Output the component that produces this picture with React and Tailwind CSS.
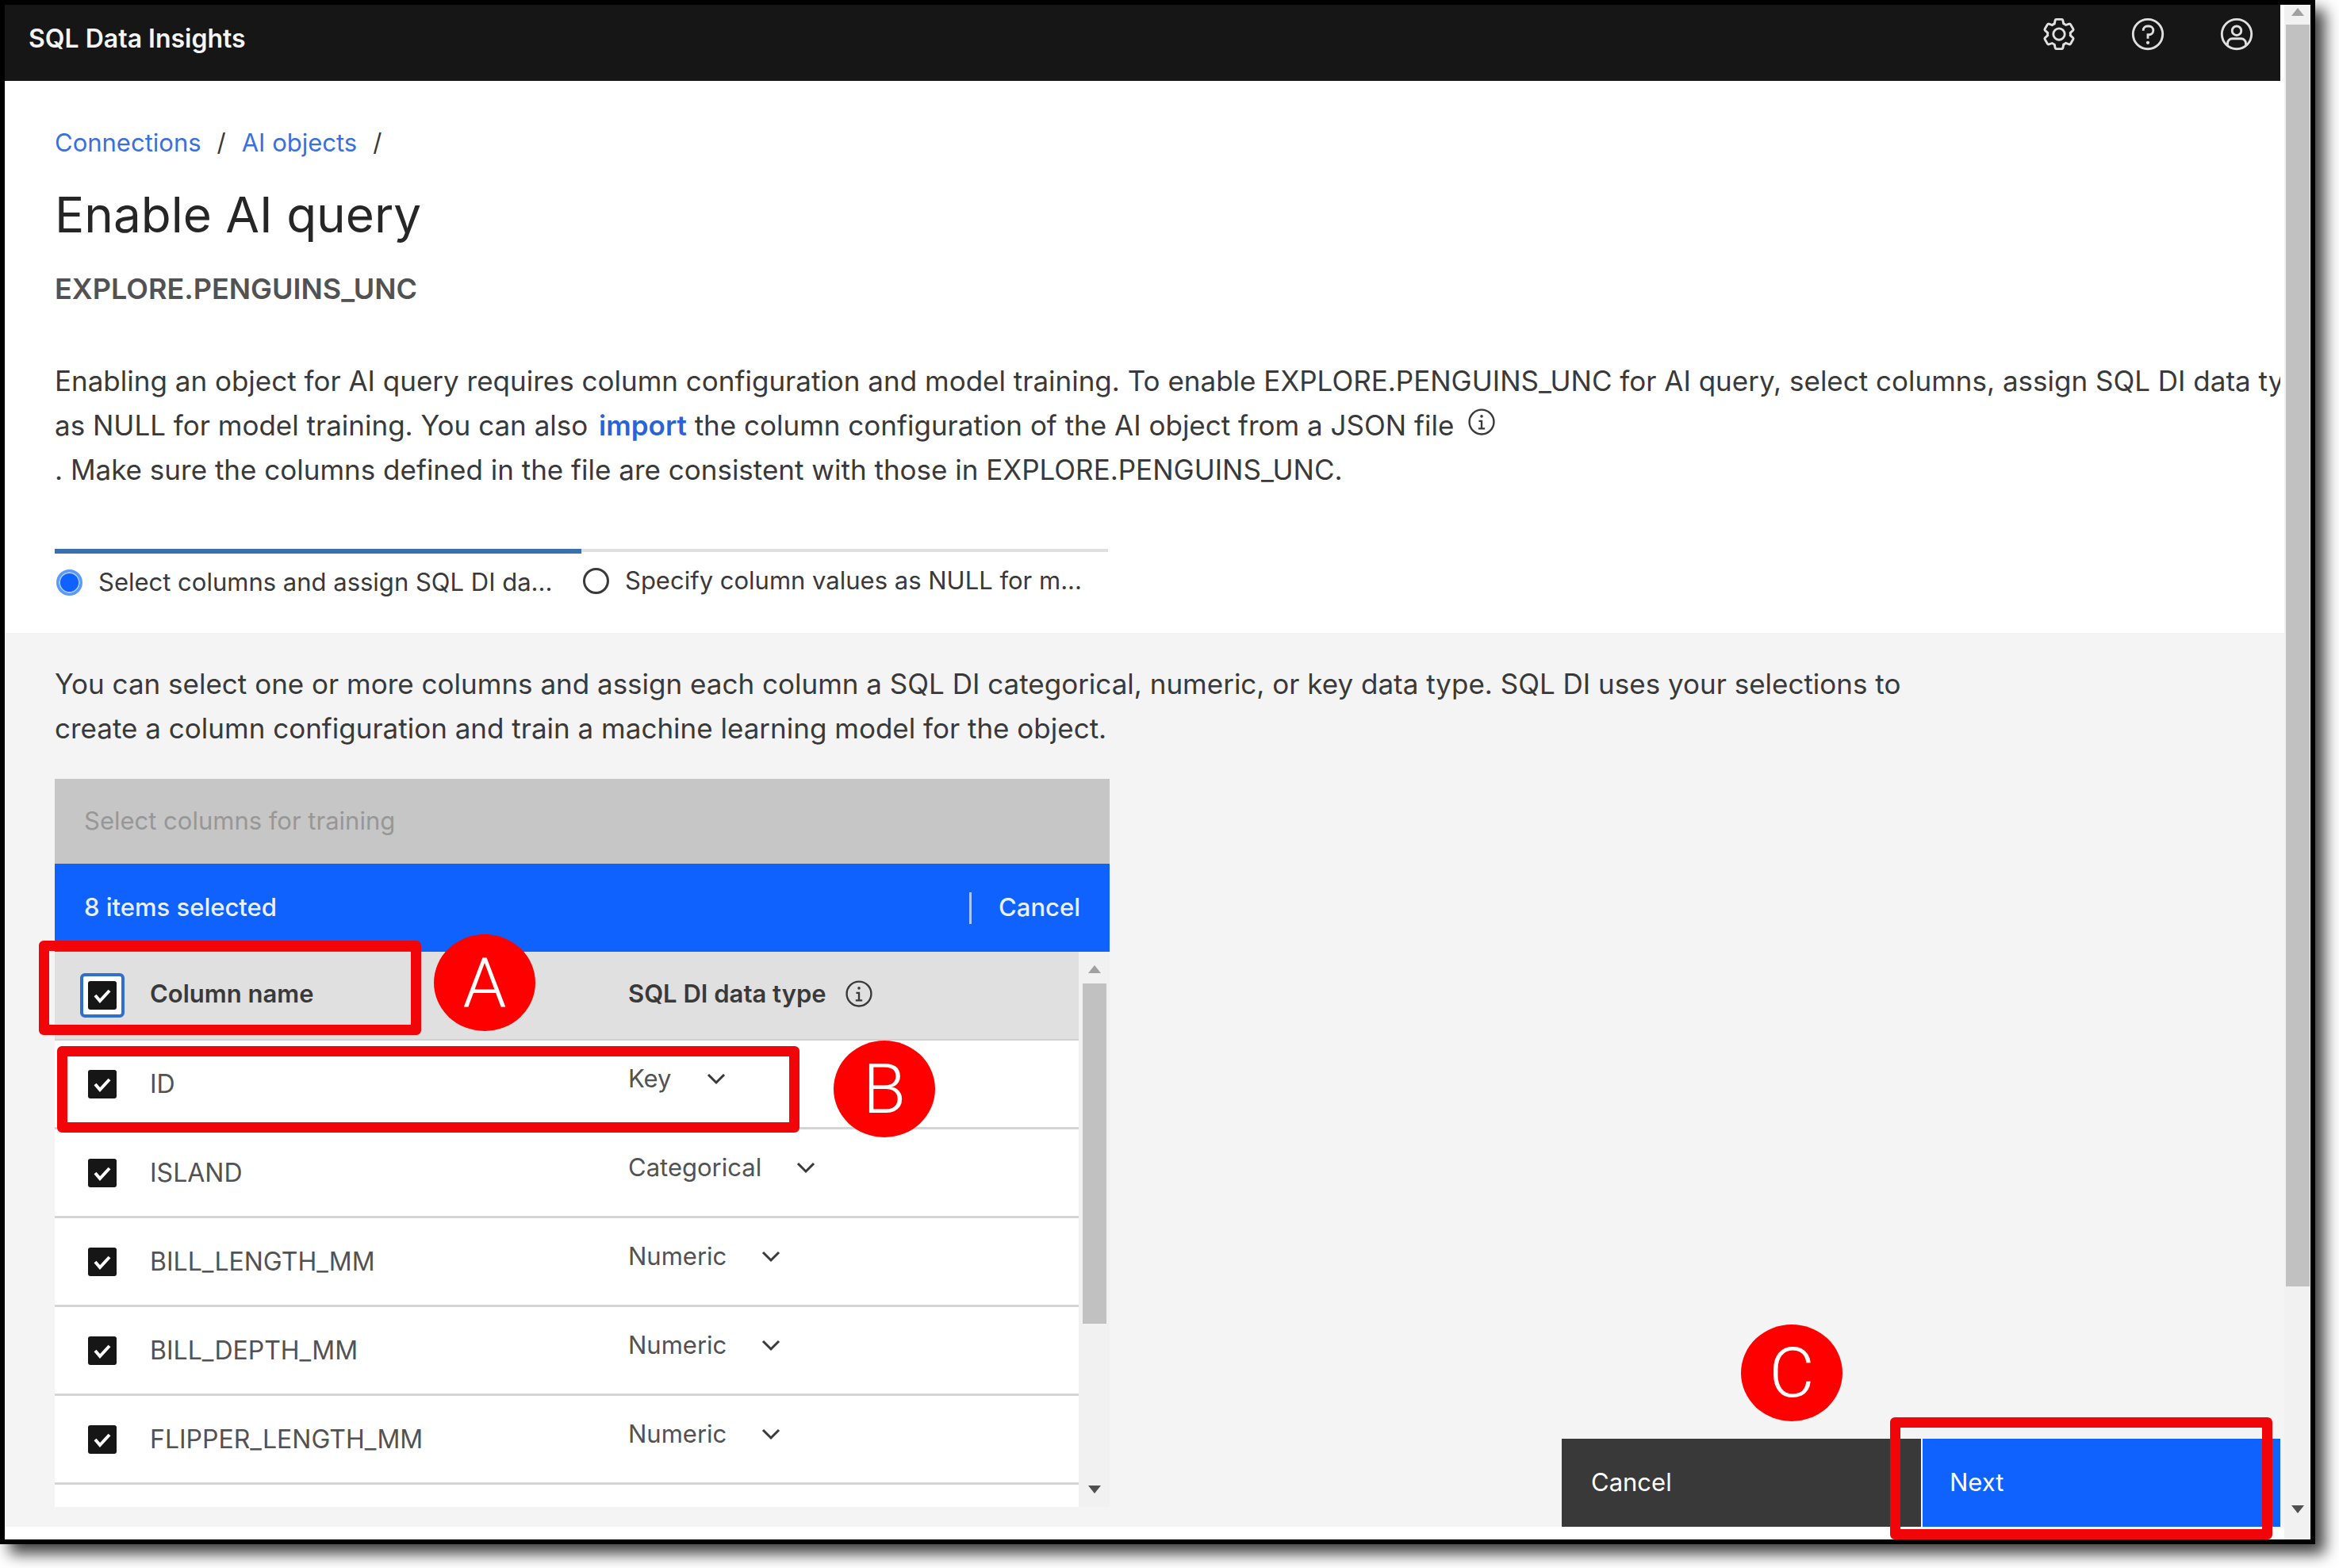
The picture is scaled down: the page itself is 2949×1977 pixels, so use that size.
import React from "react";

const COLUMNS = [
  { name: "ID", type: "Key" },
  { name: "ISLAND", type: "Categorical" },
  { name: "BILL_LENGTH_MM", type: "Numeric" },
  { name: "BILL_DEPTH_MM", type: "Numeric" },
  { name: "FLIPPER_LENGTH_MM", type: "Numeric" },
];

const TYPES = ["Key", "Categorical", "Numeric"];

function SettingsIcon() {
  return (
    <svg viewBox="0 0 32 32" className="size-[46px]" fill="currentColor" aria-hidden="true">
      <path d="M27,16.76c0-.25,0-.5,0-.76s0-.51,0-.77l1.92-1.68A2,2,0,0,0,29.3,11L26.94,7a2,2,0,0,0-1.73-1,2,2,0,0,0-.64.1l-2.43.82a11.35,11.35,0,0,0-1.31-.75l-.51-2.52a2,2,0,0,0-2-1.61H13.64a2,2,0,0,0-2,1.61l-.51,2.52a11.48,11.48,0,0,0-1.32.75L7.43,6.06A2,2,0,0,0,6.79,6,2,2,0,0,0,5.06,7L2.7,11a2,2,0,0,0,.41,2.51L5,15.24c0,.25,0,.5,0,.76s0,.51,0,.77L3.11,18.45A2,2,0,0,0,2.7,21L5.06,25a2,2,0,0,0,1.73,1,2,2,0,0,0,.64-.1l2.43-.82a11.35,11.35,0,0,0,1.31.75l.51,2.52a2,2,0,0,0,2,1.61h4.72a2,2,0,0,0,2-1.61l.51-2.52a11.48,11.48,0,0,0,1.32-.75l2.42.82a2,2,0,0,0,.64.1,2,2,0,0,0,1.73-1L29.3,21a2,2,0,0,0-.41-2.51ZM25.21,24l-3.43-1.16a8.86,8.86,0,0,1-2.71,1.57L18.36,28H13.64l-.71-3.55a9.36,9.36,0,0,1-2.7-1.57L6.79,24,4.43,20l2.72-2.4a8.9,8.9,0,0,1,0-3.13L4.43,12,6.79,8l3.43,1.16a8.86,8.86,0,0,1,2.71-1.57L13.64,4h4.72l.71,3.55a9.36,9.36,0,0,1,2.7,1.57L25.21,8,27.57,12l-2.72,2.4a8.9,8.9,0,0,1,0,3.13L27.57,20Z" />
      <path d="M16,22a6,6,0,1,1,6-6A5.94,5.94,0,0,1,16,22Zm0-10a3.91,3.91,0,0,0-4,4,3.91,3.91,0,0,0,4,4,3.91,3.91,0,0,0,4-4A3.91,3.91,0,0,0,16,12Z" />
    </svg>
  );
}

function HelpIcon() {
  return (
    <svg viewBox="0 0 32 32" className="size-[46px]" fill="none" stroke="currentColor" strokeWidth="2" aria-hidden="true">
      <circle cx="16" cy="16" r="13" />
      <path d="M12 13v-.5A3.5 3.5 0 0 1 15.500 9H17a3.500 3.500 0 0 1 0 7.500h-1V20" />
      <circle cx="16" cy="23.500" r="1.500" fill="currentColor" stroke="none" />
    </svg>
  );
}

function UserIcon() {
  return (
    <svg viewBox="0 0 32 32" className="size-[46px]" fill="none" stroke="currentColor" strokeWidth="2" aria-hidden="true">
      <circle cx="16" cy="16" r="13" />
      <circle cx="16" cy="13" r="4" />
      <path d="M8 25.500V24a4 4 0 0 1 4-4h8a4 4 0 0 1 4 4v1.500" />
    </svg>
  );
}

function InfoIcon() {
  return (
    <svg viewBox="0 0 32 32" className="size-[38px]" fill="none" stroke="currentColor" strokeWidth="2" aria-hidden="true">
      <circle cx="16" cy="16" r="13" />
      <path d="M12.500 23h7M16 23v-8h-3" />
      <circle cx="16" cy="10" r="1.500" fill="currentColor" stroke="none" />
    </svg>
  );
}

function Arrow({ down, className }) {
  return (
    <svg viewBox="0 0 16 10" className={className} fill="currentColor" aria-hidden="true">
      <path d={down ? "M0 0h16L8 10z" : "M0 10h16L8 0z"} />
    </svg>
  );
}

function Checkbox({ id, label, focused }) {
  return (
    <span className={focused ? "-m-[10px] grid size-14 place-items-center rounded-md border-4 border-[#2f6fd0] bg-white" : "grid size-9 place-items-center"}>
      <input id={id} type="checkbox" defaultChecked aria-label={label} className="size-9 appearance-none rounded-[3px] bg-[#161616] [grid-area:1/1]" />
      <svg viewBox="0 0 36 36" className="pointer-events-none size-9 [grid-area:1/1]" fill="none" stroke="white" strokeWidth="4" aria-hidden="true">
        <path d="M9 18l6 7L27 12" />
      </svg>
    </span>
  );
}

function Step({ id, label, active }) {
  return (
    <div className="w-[664px]">
      <div className={active ? "h-[6px] bg-[#3b70b0]" : "mb-[2px] h-1 bg-[#e0e0e0]"} />
      <label htmlFor={id} className="mt-4 flex h-10 items-center gap-5 whitespace-nowrap text-[31px] text-[#393939]">
        <input
          id={id}
          type="radio"
          name="step"
          defaultChecked={active}
          className="ml-[2px] size-[33px] shrink-0 appearance-none rounded-full border-[3px] border-[#393939] checked:border-[#5b9bf5] checked:bg-[#0f62fe] checked:shadow-[inset_0_0_0_2px_#a6c8ff]"
        />
        {label}
      </label>
    </div>
  );
}

function Badge({ children, className }) {
  return (
    <span className={"absolute flex h-[122px] w-32 items-center justify-center rounded-[50%] bg-[#ff0000] font-['Roboto',sans-serif] text-[88px] leading-none font-light text-white " + className}>
      {children}
    </span>
  );
}

export default function App() {
  return (
    <div className="h-screen overflow-hidden bg-white pr-[30px] pb-[30px] font-['Inter',sans-serif] text-[#393939]">
      <div className="flex h-full border-[6px] border-black bg-white shadow-[12px_12px_18px_rgba(0,0,0,0.75)]">
        <div className="flex min-w-0 flex-1 flex-col pb-4">
          <header className="mr-[5px] flex h-24 items-center justify-between bg-[#161616] pr-8 pl-[30px] text-[#e0e0e0]">
            <span className="pb-[11px] text-[32px] font-semibold text-[#f4f4f4]">SQL Data Insights</span>
            <div className="flex gap-[66px] pb-[22px]">
              <button type="button" aria-label="Settings"><SettingsIcon /></button>
              <button type="button" aria-label="Help"><HelpIcon /></button>
              <button type="button" aria-label="Account"><UserIcon /></button>
            </div>
          </header>

          <div className="mr-[5px] overflow-hidden pt-[58px] pb-11 pl-[63px]">
            <nav aria-label="Breadcrumb" className="flex h-10 items-center gap-5 text-[31px] text-[#393939]">
              <a href="#connections" className="text-[#3a6fdc]">Connections</a>
              <span>/</span>
              <a href="#objects" className="text-[#3a6fdc]">AI objects</a>
              <span>/</span>
            </nav>
            <h1 className="mt-[35px] text-[62px] leading-[72px] text-[#262626]">Enable AI query</h1>
            <h2 className="mt-[33px] text-[36px] leading-[48px] font-semibold text-[#525252]">EXPLORE.PENGUINS_UNC</h2>
            <p className="mt-16 text-[35px] leading-[56px] whitespace-nowrap">
              Enabling an object for AI query requires column configuration and model training. To enable EXPLORE.PENGUINS_UNC for AI query, select columns, assign SQL DI data ty
              <br />
              as NULL for model training. You can also{" "}
              <a href="#import" className="ml-1 font-semibold text-[#2a63d6]">import</a> the column configuration of the AI object from a JSON file
              <span className="ml-4 inline-block h-[38px] align-[-2px]"><InfoIcon /></span>
              <br />
              . Make sure the columns defined in the file are consistent with those in EXPLORE.PENGUINS_UNC.
            </p>
            <div className="mt-[72px] flex">
              <Step id="step-columns" label="Select columns and assign SQL DI da..." active />
              <Step id="step-values" label="Specify column values as NULL for m..." />
            </div>
          </div>

          <section className="flex min-h-0 flex-1 flex-col bg-[#f4f4f4] pt-9 pl-[63px]">
            <p className="text-[35px] leading-[56px] whitespace-nowrap">
              You can select one or more columns and assign each column a SQL DI categorical, numeric, or key data type. SQL DI uses your selections to
              <br />
              create a column configuration and train a machine learning model for the object.
            </p>
            <div className="mt-9 flex min-h-0 flex-1 justify-between pr-[5px]">
              <div className="relative mb-[25px] flex w-[1330px] flex-col">
                <div className="flex h-[107px] shrink-0 items-center bg-[#c6c6c6] px-[37px] text-[31px] text-[#979797]">Select columns for training</div>
                <div className="flex h-[111px] shrink-0 items-center justify-between bg-[#0f62fe] px-[37px] text-[31px] font-medium text-[#e8f1ff]">
                  <span>8 items selected</span>
                  <button type="button" className="flex items-center gap-[34px]">
                    <span className="h-10 w-[3px] bg-[#a6c8ff]" />
                    Cancel
                  </button>
                </div>
                <div className="flex min-h-0 flex-1">
                  <div className="min-w-0 flex-1 overflow-hidden bg-white">
                    <table className="w-full table-fixed border-separate border-spacing-0 text-left text-[31px]">
                      <thead className="bg-[#e0e0e0]">
                        <tr className="h-28">
                          <th scope="col" className="w-[120px] border-b-2 border-[#d0d0d0] p-0 pl-[42px]">
                            <Checkbox id="all" label="Select all columns" focused />
                          </th>
                          <th scope="col" className="w-[603px] border-b-2 border-[#d0d0d0] p-0 pb-1 font-semibold">Column name</th>
                          <th scope="col" className="border-b-2 border-[#d0d0d0] p-0 pb-1 font-semibold">
                            <span className="flex items-center gap-[22px]">SQL DI data type <InfoIcon /></span>
                          </th>
                        </tr>
                      </thead>
                      <tbody className="text-[#525252]">
                        {COLUMNS.map((c) => (
                          <tr key={c.name} className="h-28">
                            <td className="border-b-[3px] border-[#d4d4d4] p-0 pl-[42px]">
                              <Checkbox id={c.name} label={"Select " + c.name} />
                            </td>
                            <td className="border-b-[3px] border-[#d4d4d4] p-0 text-[32px]">
                              <label htmlFor={c.name}>{c.name}</label>
                            </td>
                            <td className="border-b-[3px] border-[#d4d4d4] p-0 pb-3">
                              <span className="flex items-center gap-11">
                                <select aria-label={"Data type of " + c.name} defaultValue={c.type} className="appearance-none bg-transparent [field-sizing:content]">
                                  {TYPES.map((t) => (
                                    <option key={t}>{t}</option>
                                  ))}
                                </select>
                                <svg viewBox="0 0 24 14" className="h-[14px] w-6" fill="none" stroke="#393939" strokeWidth="3" aria-hidden="true">
                                  <path d="M2 1l10 10L22 1" />
                                </svg>
                              </span>
                            </td>
                          </tr>
                        ))}
                      </tbody>
                    </table>
                  </div>
                  <div className="flex w-[39px] flex-col items-center bg-[#f1f1f1] pt-[17px] pb-[17px]">
                    <Arrow className="h-[10px] w-4 text-[#a0a0a0]" />
                    <div className="mt-[13px] h-[429px] w-[30px] bg-[#c1c1c1]" />
                    <Arrow down className="mt-auto h-[10px] w-4 text-[#505050]" />
                  </div>
                </div>
                <div className="pointer-events-none absolute top-[204px] -left-5 h-[119px] w-[482px] rounded-md border-[13px] border-[#f20509]" />
                <Badge className="top-[196px] left-[478px]">A</Badge>
                <div className="pointer-events-none absolute top-[337px] left-[3px] h-[109px] w-[936px] rounded-md border-[13px] border-[#f20509]" />
                <Badge className="top-[330px] left-[982px]">B</Badge>
              </div>

              <div className="relative flex gap-[2px] self-end text-[31px] text-white">
                <button type="button" className="h-[111px] w-[453px] bg-[#393939] px-[37px] text-left">Cancel</button>
                <button type="button" className="h-[111px] w-[451px] bg-[#0f62fe] px-[34px] text-left">Next</button>
                <div className="pointer-events-none absolute right-[10px] -bottom-4 h-[154px] w-[482px] rounded-md border-[13px] border-[#f20509]" />
                <Badge className="-top-36 left-[226px]">C</Badge>
              </div>
            </div>
          </section>
        </div>

        <div className="flex w-[33px] flex-col items-center bg-[#f1f1f1] pt-1">
          <Arrow className="h-[10px] w-4 text-[#a0a0a0]" />
          <div className="mt-[11px] h-[1591px] w-[30px] bg-[#c1c1c1]" />
          <Arrow down className="mt-auto mb-[33px] h-[10px] w-4 text-[#505050]" />
        </div>
      </div>
    </div>
  );
}
